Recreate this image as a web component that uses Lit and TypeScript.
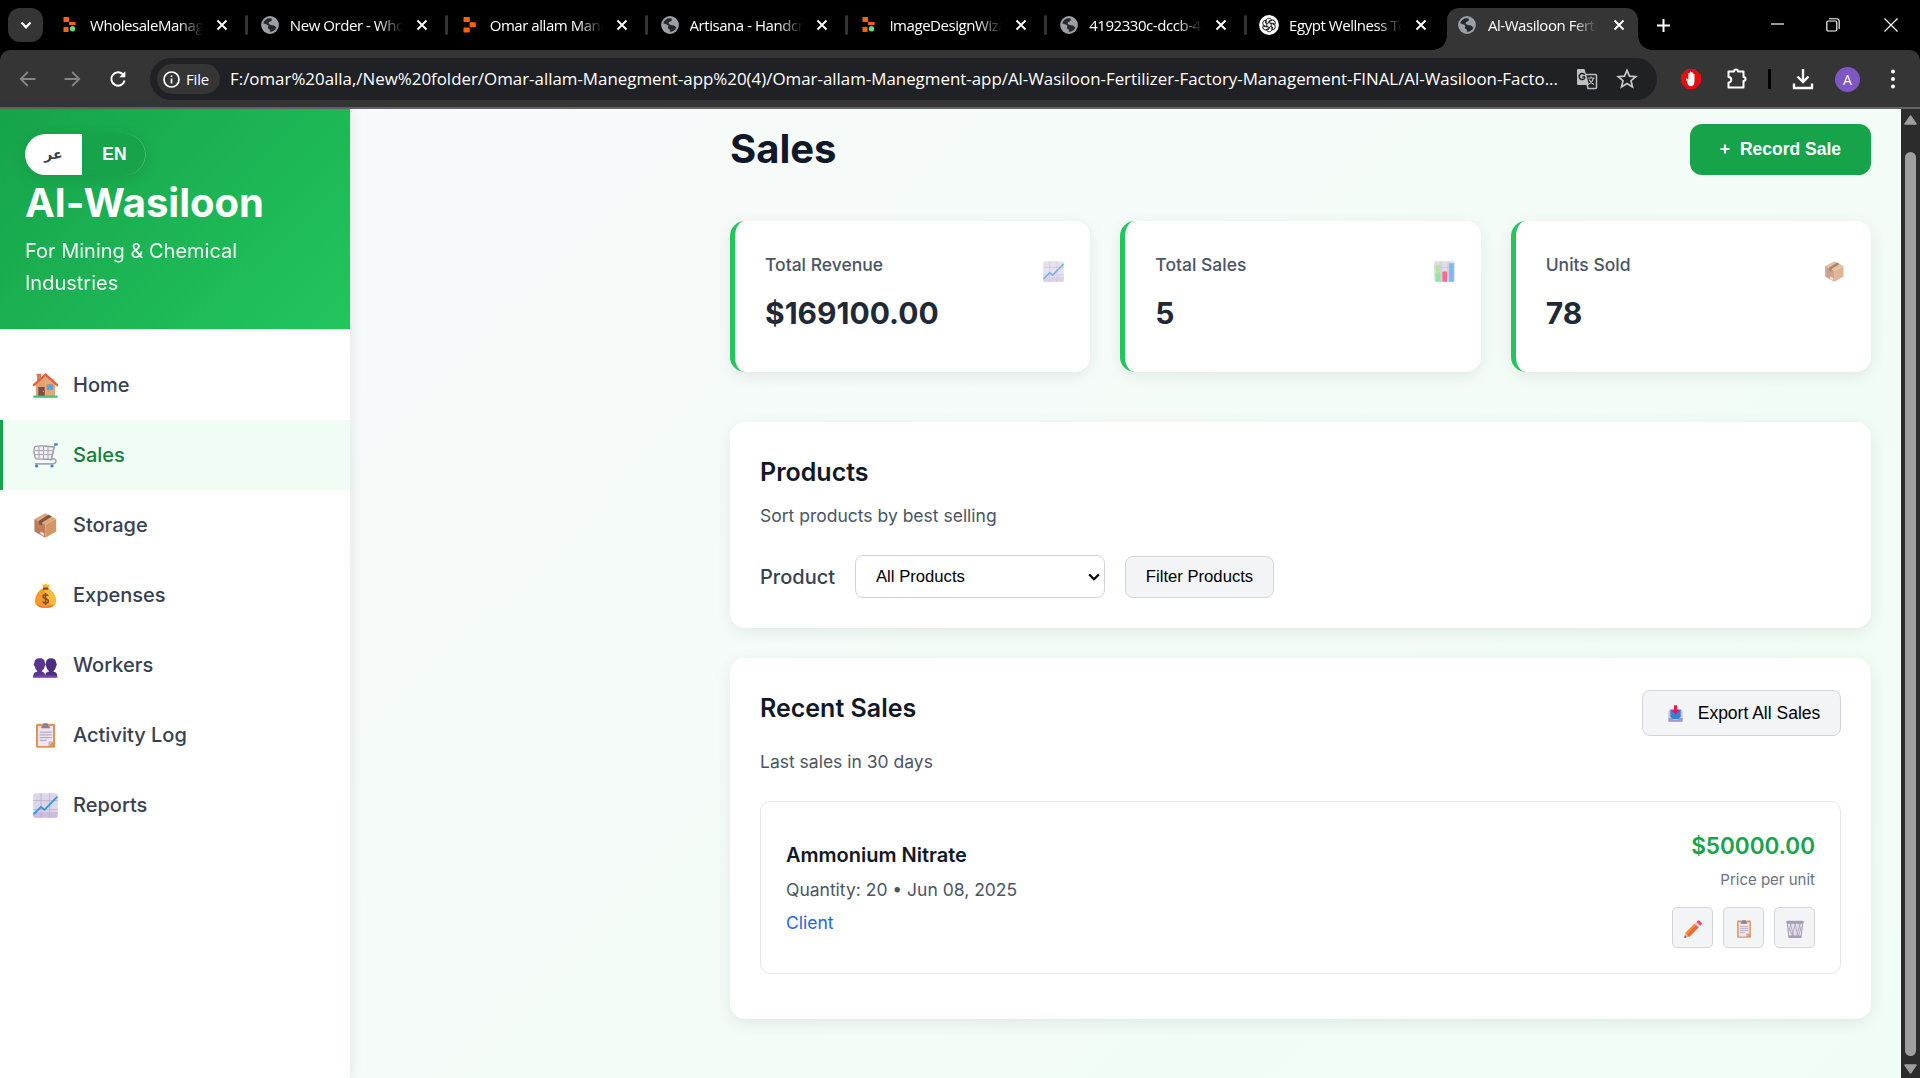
import { LitElement, html, css, svg, type TemplateResult } from "lit";
import { customElement, property } from "lit/decorators.js";

const emoji: Record<string, TemplateResult> = {
  home: svg`
    <path d="M4 1.5h4v7H4z" fill="#c98d5f"/><path d="M3.6 .8h4.8v1.6H3.6z" fill="#e8663d"/>
    <path d="M3 11 12.5 2.5 22 11v12H3z" fill="#dfa273"/>
    <path d="M12 5h10v18H12z" fill="#e9b184" opacity=".45"/>
    <path d="M.7 12.2 12.5 1.6 24.3 12.2" fill="none" stroke="#ee5a40" stroke-width="2.2" stroke-linecap="round"/>
    <path d="M5.3 14h6.4v9H5.3z" fill="#7e4b4a"/><circle cx="10.4" cy="18.4" r=".6" fill="#e0a882"/>
    <path d="M14 11.4h6v5.4h-6z" fill="#41aaf2" stroke="#cf8a5c" stroke-width=".6"/>
    <rect x=".2" y="22.4" width="24.6" height="2.4" rx=".8" fill="#48bf77"/>`,
  cart: svg`
    <path d="M2 3.6C5 2.6 16 2.8 21 4.2L18.4 16.5 3.4 15.8C1 15.4.4 5 2 3.6Z" fill="#f0eef2" stroke="#9f99a6" stroke-width="1.3"/>
    <path d="M1.2 7.6h18.4M1.4 11.6h17.8M6 3.2v12.6M10.5 3v13M15 3.2v13" stroke="#aaa5b0" stroke-width="1" fill="none"/>
    <path d="M24 1.4h-2.2L18.4 16.4c3.5-1.6 5 .4 4.4 2.6-.4 1.6-2 1.900-4 1.900H1.800" fill="none" stroke="#aaa3b4" stroke-width="1.600"/>
    <path d="M21.300 1.400h3.400" stroke="#3b83d5" stroke-width="2.200"/>
    <circle cx="3.600" cy="23" r="1.600" fill="#3f82d0"/><circle cx="19" cy="23" r="1.600" fill="#3f82d0"/>`,
  box: svg`
    <path d="M12.4.2 23.2 6 12.4 11.6 1.4 6Z" fill="#dba878"/>
    <path d="M1.4 6 12.4 11.6V24.8L1.4 18.6Z" fill="#bb7d5c"/>
    <path d="M23.2 6 12.4 11.6V24.8l10.8-6.2Z" fill="#d39667"/>
    <path d="M15.4 1.8 18.8 3.6 9 9.6v3L5.8 11V8Z" fill="#855240"/>
    <path d="M7.4 18.4 11 20.2v2.8l-3.6-2Z" fill="#efdcec"/>`,
  money: svg`
    <path d="M9 1.2 11 2l1.6-1.8L14.4 2l2.4-.8-1.6 4.6h-4.6Z" fill="#fbb52c"/>
    <path d="M10 5.4C4.600 8 2 13 2 18c0 4.600 3 6.800 10.500 6.800S23 22.600 23 18c0-5-2.600-10-8-12.600Z" fill="#f79a26"/>
    <path d="M15 5.400C20.400 8 23 13 23 18c0 2.400-.8 4.200-2.600 5.200-4-4-9.400-8-8.400-17Z" fill="#fcc843" opacity=".7"/>
    <path d="M4 21.500c4 2.400 12 2.600 17.200 0-1.500 2.500-4 3.300-8.700 3.300S5.200 24 4 21.500Z" fill="#e8652b" opacity=".7"/>
    <rect x="10" y="4.400" width="5.400" height="2.300" rx=".5" fill="#7b4b32"/>
    <path d="M15.300 12.800C14.800 11.400 10 11 10 13.600c0 2.800 5.400 1.400 5.400 4.400 0 2.800-5 2.600-5.700.6M12.600 9.900v12" fill="none" stroke="#7b4b32" stroke-width="1.500"/>`,
  people: svg`
    <path d="M1.400 10C1.400 7 3 5.200 6.700 5.200S11.900 7 11.900 10l.6 1.600-.8 1.900c-.4 1.900-1.300 3.400-2.700 4.300v1c2.200.4 3.200 1.300 3.200 5.700H.2c0-4.300 1.200-5.300 3.900-5.700v-1c-1.200-.9-2-2.400-2.300-4.300L.6 11.600Z" fill="#5a378f"/>
    <path d="M13 10c0-3 1.700-4.800 5-4.800s5.200 1.800 5.200 4.800l.7 1.600-.9 1.900c-.3 1.900-1.100 3.400-2.400 4.300v1c2.600.4 3.700 1.400 3.700 5.700H12.100c0-4.300 1.100-5.300 3.700-5.700v-1c-1.300-.9-2.200-2.400-2.500-4.300l-.9-1.900Z" fill="#4c2e80"/>
    <path d="M.4 22.900c5-.8 18-.8 23.800 0v1.600H.2Z" fill="#7443a8"/>`,
  clip: svg`
    <rect x="3" y=".8" width="19" height="24" rx="1.300" fill="#e29455"/>
    <path d="M5 3h15v15.500L15.500 23H5Z" fill="#ece4f3"/>
    <path d="M20 18.500 15.500 23v-3.200q0-1.300 1.300-1.300Z" fill="#c4b3d3"/>
    <path d="M8 5.200c0-1.700.7-2.300 2-2.300V1.300q0-1.100 1.200-1.100h2.600q1.200 0 1.200 1.100v1.600c1.300 0 2 .6 2 2.300Z" fill="#8b7f8e"/>
    <path d="M6.700 9.200h12M6.700 11.900h12M6.700 14.600h12M6.700 17.300h7" stroke="#aaa0b2" stroke-width="1"/>`,
  chart: svg`
    <rect x=".2" y=".2" width="24.600" height="24.600" rx="2.200" fill="#ded5e8"/>
    <path d="M.2 19h24.600v3.600a2.200 2.200 0 0 1-2.200 2.200H2.400a2.200 2.200 0 0 1-2.200-2.200Z" fill="#c9b5dc" opacity=".8"/>
    <path d="M.2 7.600h24.600M.2 16.600h24.600M8 .2v24.600M16.600 .2v24.600" stroke="#b9aec6" stroke-width=".8"/>
    <path d="M.6 21.200 7.900 14l3.600 2.800L24.400 3.600" fill="none" stroke="#3a95dc" stroke-width="1.900"/>`,
  bars: svg`
    <rect x=".2" y=".2" width="24.600" height="24.600" rx="2.200" fill="#d6cde1"/>
    <path d="M.2 7.600h24.600M.2 16.600h24.600M8.500 .2v24.600M16.600 .2v24.600" stroke="#b5a9c3" stroke-width=".8"/>
    <rect x="2" y="5.200" width="5.600" height="19.600" rx=".6" fill="#8be070"/><rect x="2" y="15" width="5.600" height="9.800" fill="#52d294" opacity=".6"/>
    <rect x="9.900" y="12.600" width="5.600" height="12.200" rx=".6" fill="#ee2f67"/>
    <rect x="17.800" y="2.600" width="5.800" height="22.200" rx=".6" fill="#3f9fee"/>`,
  inbox: svg`
    <path d="M2 10 4.500 6h16L23 10v13.300q0 1.500-1.500 1.500h-18Q2 24.800 2 23.300Z" fill="#cdbfe0"/>
    <path d="M5 7h15v10l-3 3.500H8L5 17Z" fill="#2c83d8"/>
    <path d="M2 19h5l2 2.700h7l2-2.700h5v4.300q0 1.500-1.500 1.500h-18Q2 24.800 2 23.300Z" fill="#ab95c4"/>
    <path d="M10.300 .4h4.500v7.200h4L12.500 14 6.300 7.600h4Z" fill="#e31b54"/>`,
  pencil: svg`
    <path d="M.4 24.800 1.800 17.800 7.300 23.200Z" fill="#e0b391"/><path d="M.4 24.800 1.100 21.600 3.500 24Z" fill="#6a2f4e"/>
    <path d="M1.800 17.800 15 5l5.300 5.200L7.300 23.200Z" fill="#fb8b36"/>
    <path d="M3.800 19.800 17 7l3.300 3.200L7.300 23.200Z" fill="#ee6a30"/>
    <path d="M15 5l2.300-2.300L22.800 8l-2.500 2.200Z" fill="#d8cfe4"/>
    <path d="M17.300 2.700 19 1q1.300-1 2.600.2l2.600 2.600q1.200 1.300.1 2.600L22.800 8Z" fill="#f5465f"/>`,
  trash: svg`
    <path d="M1.700 4.500h21.600L21 24.300H4Z" fill="#e2dee9" stroke="#9f96ac" stroke-width="1.200"/>
    <path d="M6 5l5 19M12.500 5l4.500 19M4 11l6 13M20 5l-6 19M13 5 8 24M7 5l-3 11M21 10l-4 14M18 5l2.500 10" stroke="#a99fb6" stroke-width="1" fill="none"/>
    <rect x=".5" y="1" width="24" height="3.600" rx="1.200" fill="#a79db2"/>
    <path d="M3.600 21.500h17.800l-.4 3.200H4Z" fill="#a79db2"/>`,
};

const favicons: Record<string, TemplateResult> = {
  globe: svg`<circle cx="9" cy="9" r="8.900" fill="#9aa0a6"/>
    <path d="M8.800 2.200c-3.200 0-5.700 2-6.500 5l3.800 1.600c1.300.5 1.700 1.400 1 2.200-.7.900-.3 1.600.8 1.900 1 .3 1.300 1.200.8 2.900 3.200.2 5.800-1.500 6.700-4.200L13 9.500c-2-.4-4.300-.2-5.200-1.700-.8-1.500.5-2.300 1.800-2.400 1.200-.2 1.500-1.200.9-2.900Z" fill="#26282b"/>`,
  dots: svg`<rect x="2.500" y="1" width="5.500" height="5" rx=".6" fill="#ff6208"/><rect x="8" y="6" width="6.500" height="3" rx=".5" fill="#ff6208"/>
    <rect x="2.500" y="11" width="5" height="5" rx=".6" fill="#ff6208"/><circle cx="11.500" cy="12.800" r="2.700" fill="#63dd78"/>`,
  replit: svg`<rect x="2.500" y="1" width="6.300" height="5" rx=".7" fill="#ff6208"/><rect x="8.600" y="6.200" width="6.200" height="5" rx=".7" fill="#ff6208"/>
    <rect x="2.500" y="11.400" width="6.300" height="5" rx=".7" fill="#ff6208"/>`,
  knot: svg`<circle cx="9" cy="9" r="9.900" fill="#fff"/>
    <g fill="none" stroke="#222" stroke-width="1">${[0, 60, 120, 180, 240, 300].map(
      (a) => svg`<path transform="rotate(${a} 9 9)" d="M9 6.500 6.200 8V4.800C6.200 2 10 1.400 11.400 3.600L9 5"/>`,
    )}</g>`,
};

const closeGlyph = html`<svg class="close" viewBox="0 0 12 12"><path d="M1.500 1.500l9 9M10.500 1.500l-9 9" stroke="#fff" stroke-width="1.900"/></svg>`;

@customElement("emoji-icon")
export class EmojiIcon extends LitElement {
  @property() name = "home";
  static styles = css`
    :host { display: block; width: 25px; height: 25px; flex: none; }
    svg { display: block; width: 100%; height: 100%; }
  `;
  render() {
    return html`<svg viewBox="0 0 25 25">${emoji[this.name]}</svg>`;
  }
}

@customElement("browser-chrome")
export class BrowserChrome extends LitElement {
  static styles = css`
    :host { display: block; flex: none; font-family: "Open Sans", "Noto Sans", sans-serif; color: #fff; }
    .strip { display: flex; height: 50px; background: #000; align-items: stretch; }
    .search { width: 35px; height: 34px; margin: 8px 5.500px 0 8px; border-radius: 12px; background: #353535; flex: none; display: flex; align-items: center; justify-content: center; }
    .search svg { width: 14px; height: 14px; }
    .tab { box-sizing: border-box; width: 199.850px; flex: none; display: flex; align-items: center; padding-left: 12.500px; position: relative; }
    .fav { width: 18px; height: 18px; flex: none; overflow: visible; }
    .name { width: 113px; margin-left: 11px; font-size: 15px; letter-spacing: -0.450px; line-height: 24px; white-space: nowrap; overflow: hidden; flex: none;
      -webkit-mask-image: linear-gradient(90deg, #000 78%, transparent 100%); mask-image: linear-gradient(90deg, #000 78%, transparent 100%); }
    .close { width: 12px; height: 12px; margin-left: 13px; flex: none; }
    .sep { width: 3px; height: 20px; border-radius: 2px; background: #343434; margin-left: 17px; flex: none; }
    .tab.active { width: 191px; margin-top: 8px; background: #353535; border-radius: 12px 12px 0 0; padding: 0 0 8px 10.500px; }
    .tab.active .name { margin-left: 12px; width: 109px; }
    .tab.active .close { margin-left: 16px; }
    .tab.active::before, .tab.active::after { content: ""; position: absolute; bottom: 0; width: 14px; height: 14px; }
    .tab.active::before { left: -14px; background: radial-gradient(circle at 0 0, transparent 13.500px, #353535 14px); }
    .tab.active::after { right: -14px; background: radial-gradient(circle at 100% 0, transparent 13.500px, #353535 14px); }
    .plus { width: 13px; height: 13px; margin: 18.500px auto 0 18.500px; }
    .win { display: flex; align-items: center; gap: 44px; padding-right: 22px; }
    .win svg { width: 14px; height: 14px; display: block; overflow: visible; }
    .win .min { margin-right: -3px; }
    .bar { display: flex; align-items: center; height: 57px; box-sizing: border-box; background: #353535; border-radius: 10px 10px 0 0; padding: 1px 20px 0 19px; }
    .back { background: #000; }
    .nav { width: 18px; height: 18px; margin-right: 27px; flex: none; }
    .nav.reload { margin-right: 23px; margin-left: 0; }
    .omni { display: flex; align-items: center; width: 1507px; height: 42px; box-sizing: border-box; border-radius: 21px; background: #202125; padding: 0 18px 0 7px; flex: none; }
    .chip { display: flex; align-items: center; gap: 6px; width: 63px; height: 30px; border-radius: 15px; background: #353535; padding-left: 6px; box-sizing: border-box; flex: none; font-size: 15px; font-weight: 500; letter-spacing: -0.200px; }
    .chip svg { width: 17px; height: 17px; flex: none; }
    .url { width: 1330px; height: 30px; margin-left: 10px; flex: none; overflow: visible; }
    .url text { font: 16.500px "Open Sans", "Noto Sans", sans-serif; fill: #fff; }
    .tr { width: 22px; height: 22px; margin-left: 16px; flex: none; }
    .star { width: 22px; height: 22px; margin-left: 18px; flex: none; }
    .ext { width: 22px; height: 22px; flex: none; }
    .ext.gap { margin-left: 24px; }
    .ext.gap.first { margin-left: 23px; }
    .rule { width: 3px; height: 20px; background: #000; margin: 0 21px 0 20px; }
    .avatar { width: 25px; height: 25px; border-radius: 50%; background: #7e57c2; display: flex; align-items: center; justify-content: center; font-size: 14px; margin: 0 29.500px 0 21px; flex: none; }
    .menu { width: 6px; height: 20px; flex: none; }
    .edge { height: 2px; background: #646464; }
  `;

  private tabs = [
    ["dots", "WholesaleManager"],
    ["globe", "New Order - Wholesale"],
    ["replit", "Omar allam Manegment"],
    ["globe", "Artisana - Handcrafted"],
    ["dots", "ImageDesignWizard"],
    ["globe", "4192330c-dccb-4a0e"],
    ["knot", "Egypt Wellness Tour"],
  ];

  render() {
    return html`
      <div class="strip">
        <div class="search"><svg viewBox="0 0 14 14"><path d="M2.500 4.500 7 9.300l4.500-4.800" fill="none" stroke="#fff" stroke-width="2.200"/></svg></div>
        ${this.tabs.map(
          ([icon, name], i) => html`<div class="tab">
            <svg class="fav" viewBox="0 0 18 18">${favicons[icon]}</svg>
            <span class="name">${name}</span>${closeGlyph}
            ${i < 6 ? html`<span class="sep"></span>` : ""}
          </div>`,
        )}
        <div class="tab active">
          <svg class="fav" viewBox="0 0 18 18">${favicons.globe}</svg>
          <span class="name">Al-Wasiloon Fertilizer</span>${closeGlyph}
        </div>
        <svg class="plus" viewBox="0 0 13 13"><path d="M6.500 0v13M0 6.500h13" stroke="#fff" stroke-width="2"/></svg>
        <div class="win">
          <svg class="min" viewBox="0 0 14 14"><path d="M0 6h13" stroke="#fff" stroke-width="1.200"/></svg>
          <svg viewBox="0 0 14 14"><rect x=".8" y="3" width="10" height="10" rx="1.500" fill="none" stroke="#fff" stroke-width="1.200"/><path d="M3 .8h7.500q2.700 0 2.700 2.700V11" fill="none" stroke="#fff" stroke-width="1.100"/></svg>
          <svg viewBox="0 0 14 14"><path d="M.5.500l13 13M13.500.500l-13 13" stroke="#fff" stroke-width="1.200"/></svg>
        </div>
      </div>
      <div class="back">
      <div class="bar">
        <svg class="nav" viewBox="0 0 18 18"><path d="M16.500 9H2M8.800 2 1.800 9l7 7" fill="none" stroke="#858585" stroke-width="1.800"/></svg>
        <svg class="nav" viewBox="0 0 18 18"><path d="M.5 9H15M8.200 2l7 7-7 7" fill="none" stroke="#858585" stroke-width="1.800"/></svg>
        <svg class="nav reload" viewBox="0 0 18 18"><path d="M15.600 10.500A6.700 6.700 0 1 1 14.500 5" fill="none" stroke="#fff" stroke-width="2"/><path d="M16.300 1.300v6h-6Z" fill="#fff"/></svg>
        <div class="omni">
          <div class="chip">
            <svg viewBox="0 0 17 17"><circle cx="8.500" cy="8.500" r="7.500" fill="none" stroke="#fff" stroke-width="1.700"/><path d="M8.500 7.500v5M8.500 4.400v1.700" stroke="#fff" stroke-width="1.700"/></svg>
            <span>File</span>
          </div>
          <svg class="url"><text x="0" y="21" textLength="1328" lengthAdjust="spacingAndGlyphs">F:/omar%20alla,/New%20folder/Omar-allam-Manegment-app%20(4)/Omar-allam-Manegment-app/Al-Wasiloon-Fertilizer-Factory-Management-FINAL/Al-Wasiloon-Facto...</text></svg>
          <svg class="tr" viewBox="0 0 22 22">
            <path d="M9 6.500h10.500q1 0 1 1V19.500q0 1-1 1H12Z" fill="none" stroke="#c0c0c0" stroke-width="1.500"/>
            <path d="M2 1h6.500L13 17H2q-1 0-1-1V2q0-1 1-1Z" fill="#c0c0c0"/>
            <path d="M9 9H6.200M8.700 7A3 3 0 1 0 9.100 9.200" fill="none" stroke="#202125" stroke-width="1.500"/>
            <path d="M11.500 10h7M15 8.500V10M17.500 10c-.5 2.500-2.500 5-4.500 6M13 11.500c1 2 3 4 5 5" fill="none" stroke="#c0c0c0" stroke-width="1.200"/>
          </svg>
          <svg class="star" viewBox="0 0 22 22"><path d="M11 2.300l2.500 5.800 6.300.5-4.800 4.100 1.500 6.200L11 15.600l-5.500 3.300L7 12.700 2.200 8.600l6.300-.5Z" fill="none" stroke="#c8c8c8" stroke-width="1.700"/></svg>
        </div>
        <svg class="ext gap first" viewBox="0 0 22 22">
          <path d="M7 1h8l6 6v8l-6 6H7l-6-6V7Z" fill="#e60f0f"/>
          <path d="M6.300 11.800c-.6-1.200.7-1.700 1.400-.7l.6.900V5.700c0-1.100 1.500-1.100 1.500 0V4.500c0-1.200 1.600-1.200 1.600 0v.6c0-1.100 1.600-1.100 1.600 0v1.300c0-1 1.500-1 1.500 0V13c0 3.500-1.500 5.200-3.900 5.200-2.300 0-3-2-4.300-6.400Z" fill="#fff"/>
        </svg>
        <svg class="ext gap" viewBox="0 0 22 22"><path d="M2.500 3.500H8a2 2 0 0 1 4 0H17.500V9a2 2 0 0 1 0 4V19.500h-15v-5a2.700 2.700 0 0 0 0-5.500Z" fill="none" stroke="#fff" stroke-width="2" stroke-linejoin="round"/></svg>
        <span class="rule"></span>
        <svg class="ext" viewBox="0 0 22 22"><path d="M11 1v12.500M5.500 8.500 11 14l5.500-5.500M2 15.500v4.500h18v-4.500" fill="none" stroke="#fff" stroke-width="2.400"/></svg>
        <span class="avatar">A</span>
        <svg class="menu" viewBox="0 0 6 20"><circle cx="3" cy="2.500" r="2" fill="#fff"/><circle cx="3" cy="10" r="2" fill="#fff"/><circle cx="3" cy="17.500" r="2" fill="#fff"/></svg>
      </div>
      </div>
      <div class="edge"></div>
    `;
  }
}

@customElement("side-bar")
export class SideBar extends LitElement {
  static styles = css`
    :host { display: block; width: 350px; flex: none; background: #fff; box-shadow: 2px 0 12px rgba(0, 0, 0, 0.080); z-index: 1; }
    .head { box-sizing: border-box; height: 221px; padding: 25px 25px 30px; background: linear-gradient(135deg, #16a34a, #22c55e); border-bottom: 1px solid #e5e7eb; color: #fff; }
    .lang { display: flex; width: 121px; height: 41px; border-radius: 20.500px; overflow: hidden; box-shadow: 0 4px 15px rgba(0, 0, 0, 0.100); font: bold 17.500px "Liberation Sans", Arial, sans-serif; }
    .lang span { display: flex; align-items: center; justify-content: center; }
    .ar { width: 57px; background: #fff; color: #374151; font-family: "DejaVu Sans", sans-serif; font-size: 14px; font-weight: 700; padding-bottom: 2px; box-sizing: border-box; }
    .en { flex: 1; padding: 0 0 1px 1px; background: #16a34a; box-shadow: inset -1px 0 0 rgba(255, 255, 255, 0.250); border-radius: 0 20.500px 20.500px 0; }
    .brand { font-size: 40px; font-weight: 700; line-height: 56px; }
    .sub { margin-top: 4px; font-size: 20px; line-height: 32px; font-weight: 400; opacity: 0.950; }
    .nav { padding-top: 20px; }
    .item { display: flex; align-items: center; gap: 15px; box-sizing: border-box; height: 70px; padding-left: 30px; border-left: 3px solid transparent; font-size: 20px; font-weight: 500; color: #374151; }
    .item emoji-icon { margin-top: 1px; }
    .item.on { background: #f0fdf4; border-color: #16a34a; color: #15803d; }
  `;
  private items = [
    ["home", "Home"], ["cart", "Sales"], ["box", "Storage"], ["money", "Expenses"],
    ["people", "Workers"], ["clip", "Activity Log"], ["chart", "Reports"],
  ];
  render() {
    return html`
      <div class="head">
        <div class="lang"><span class="ar">عر</span><span class="en">EN</span></div>
        <div class="brand">Al-Wasiloon</div>
        <div class="sub">For Mining &amp; Chemical Industries</div>
      </div>
      <div class="nav">
        ${this.items.map(
          ([icon, label]) => html`<div class="item ${label === "Sales" ? "on" : ""}"><emoji-icon name=${icon}></emoji-icon><span>${label}</span></div>`,
        )}
      </div>
    `;
  }
}

@customElement("sales-page")
export class SalesPage extends LitElement {
  static styles = css`
    :host { display: block; flex: 1; min-width: 0; box-sizing: border-box; padding: 15px 30px 0 380px; color: #111827; }
    .top { display: flex; justify-content: space-between; height: 51px; }
    .title { font-size: 40px; font-weight: 700; line-height: 49px; }
    .record { display: flex; align-items: center; justify-content: center; gap: 10px; width: 181px; height: 51px; border-radius: 12px; background: #16a34a; color: #fff; font: bold 17.500px "Liberation Sans", Arial, sans-serif; padding-bottom: 1px; box-sizing: border-box; }
    .record svg { width: 10px; height: 10px; }
    .stats { display: grid; grid-template-columns: repeat(3, 1fr); gap: 30px; margin-top: 46px; }
    .card, .panel { background: #fff; border-radius: 15px; box-shadow: 0 4px 15px rgba(0, 0, 0, 0.080); box-sizing: border-box; }
    .card { height: 151px; border-left: 5px solid #22c55e; padding: 30px 26px 0 30px; display: flex; justify-content: space-between; }
    .card emoji-icon { width: 21px; height: 21px; margin-top: 9.500px; opacity: 0.700; }
    .label { font-size: 17.500px; font-weight: 500; line-height: 27px; color: #4b5563; }
    .value { margin-top: 11px; font-size: 30px; font-weight: 700; line-height: 48px; color: #1f2937; }
    .panel { padding: 30px; }
    .products { margin-top: 50px; height: 206px; }
    .recent { margin-top: 30px; height: 361px; }
    .h2 { font-size: 25px; font-weight: 600; line-height: 40px; }
    .hint { font-size: 17.500px; line-height: 28px; color: #4b5563; }
    .products .hint { margin-top: 10px; }
    .form { display: flex; align-items: flex-end; margin-top: 25px; font: 16.670px "Liberation Sans", Arial, sans-serif; color: #000; }
    .fl { width: 95px; font: 500 20px/43px Inter, sans-serif; color: #374151; height: 43px; box-sizing: border-box; padding-top: 1px; }
    .select { width: 250px; height: 43px; box-sizing: border-box; border: 1px solid #d1d5db; border-radius: 8px; display: flex; align-items: center; justify-content: space-between; padding: 1px 4px 0 20px; }
    .select svg { width: 12px; height: 8px; margin-top: 0; }
    .btn { box-sizing: border-box; border: 1px solid #d1d5db; border-radius: 8px; background: #f3f4f6; display: flex; align-items: center; justify-content: center; color: #000; }
    .filter { width: 149px; height: 42px; margin-left: 20px; padding-bottom: 1px; }
    .row { display: flex; justify-content: space-between; height: 60px; }
    .export { width: 199px; height: 46px; margin-top: 2px; gap: 14px; font: 17.500px "Liberation Sans", Arial, sans-serif; padding: 1px 0 0 4px; }
    .export emoji-icon { width: 17px; height: 17px; }
    .sale { margin-top: 25px; height: 173px; box-sizing: border-box; border: 1px solid #e5e7eb; border-radius: 10px; padding: 1px 25px 0; display: flex; align-items: center; justify-content: space-between; }
    .info { display: flex; flex-direction: column; gap: 5px; }
    .pname { font-size: 20px; font-weight: 600; line-height: 32px; }
    .client { color: #2563eb; }
    .money { display: flex; flex-direction: column; align-items: flex-end; padding-bottom: 2px; }
    .price { font-size: 22.500px; font-weight: 600; line-height: 37px; color: #16a34a; }
    .per { margin-top: 4px; font-size: 15px; line-height: 24px; color: #6b7280; }
    .acts { display: flex; gap: 10px; margin-top: 15px; }
    .acts .btn { width: 41px; height: 41px; border-radius: 5px; padding-top: 3px; }
    .acts emoji-icon { width: 18px; height: 18px; }
  `;
  private stats = [
    ["Total Revenue", "$169100.00", "chart"],
    ["Total Sales", "5", "bars"],
    ["Units Sold", "78", "box"],
  ];
  render() {
    return html`
      <div class="top">
        <div class="title">Sales</div>
        <div class="record"><svg viewBox="0 0 11 11"><path d="M5.500.500v10M.5 5.500h10" stroke="#fff" stroke-width="2.400"/></svg><span>Record Sale</span></div>
      </div>
      <div class="stats">
        ${this.stats.map(
          ([label, value, icon]) => html`<div class="card">
            <div><div class="label">${label}</div><div class="value">${value}</div></div>
            <emoji-icon name=${icon}></emoji-icon>
          </div>`,
        )}
      </div>
      <div class="panel products">
        <div class="h2">Products</div>
        <div class="hint">Sort products by best selling</div>
        <div class="form">
          <span class="fl">Product</span>
          <div class="select"><span>All Products</span><svg viewBox="0 0 12 8"><path d="M1.200 1.500 6 6.200l4.800-4.700" fill="none" stroke="#000" stroke-width="2.300"/></svg></div>
          <div class="btn filter">Filter Products</div>
        </div>
      </div>
      <div class="panel recent">
        <div class="row">
          <div class="h2">Recent Sales</div>
          <div class="btn export"><emoji-icon name="inbox"></emoji-icon><span>Export All Sales</span></div>
        </div>
        <div class="hint">Last sales in 30 days</div>
        <div class="sale">
          <div class="info">
            <div class="pname">Ammonium Nitrate</div>
            <div class="hint">Quantity: 20 • Jun 08, 2025</div>
            <div class="hint client">Client</div>
          </div>
          <div class="money">
            <div class="price">$50000.00</div>
            <div class="per">Price per unit</div>
            <div class="acts">
              ${["pencil", "clip", "trash"].map((n) => html`<div class="btn"><emoji-icon name=${n}></emoji-icon></div>`)}
            </div>
          </div>
        </div>
      </div>
    `;
  }
}

@customElement("app-root")
export class AppRoot extends LitElement {
  static styles = css`
    :host { display: flex; flex-direction: column; width: 1920px; height: 1078px; overflow: hidden; font-family: Inter, sans-serif; }
    .page { flex: 1; min-height: 0; display: flex; background: linear-gradient(135deg, #f8fafc 0%, #f0fdf4 100%); }
    .scroll { width: 19px; flex: none; box-sizing: border-box; background: #2c2c2c; display: flex; flex-direction: column; align-items: center; padding: 6px 0 4px; }
    .scroll svg { width: 13px; height: 10px; display: block; flex: none; }
    .thumb { width: 11px; height: 904px; margin: 27px 0 8px; border-radius: 6px; background: #9f9f9f; flex: none; }
  `;
  render() {
    return html`
      <browser-chrome></browser-chrome>
      <div class="page">
        <side-bar></side-bar>
        <sales-page></sales-page>
        <div class="scroll">
          <svg viewBox="0 0 13 10"><path d="M6.500 1 12 9H1Z" fill="#9f9f9f" stroke="#9f9f9f" stroke-width="1.500" stroke-linejoin="round"/></svg>
          <div class="thumb"></div>
          <svg viewBox="0 0 13 10"><path d="M6.500 9 12 1H1Z" fill="#9f9f9f" stroke="#9f9f9f" stroke-width="1.500" stroke-linejoin="round"/></svg>
        </div>
      </div>
    `;
  }
}
